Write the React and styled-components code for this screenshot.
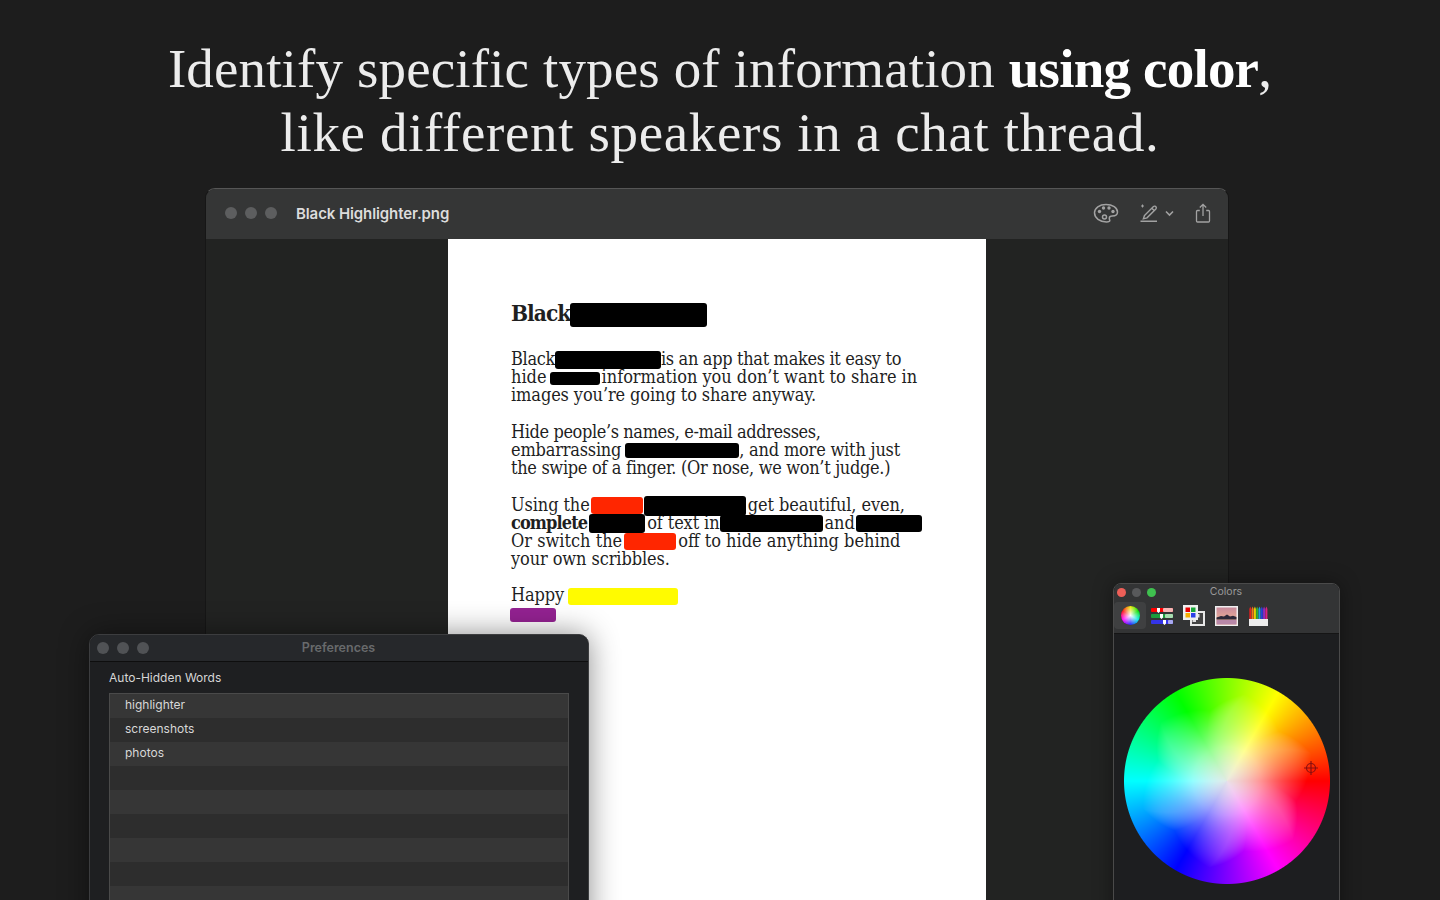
import React, { useEffect, useRef } from "react";
import styled, { createGlobalStyle } from "styled-components";

const Global = createGlobalStyle`
  html, body { margin: 0; padding: 0; background: #1d1d1d; }
  * { box-sizing: border-box; }
`;

const Page = styled.div`
  position: relative;
  width: 1440px;
  height: 900px;
  overflow: hidden;
  background: #1d1d1d;
  padding-top: 37px;
`;
const Headline = styled.h1`
  margin: 0;
  text-align: center;
  font-family: "Liberation Serif", serif;
  font-weight: 400;
  font-size: 55px;
  line-height: 64px;
  color: #ececec;
  strong { font-weight: 700; color: #fff; letter-spacing: -0.8px; }
`;
const HeadLine = styled.span`
  display: block;
  letter-spacing: ${p => p.$track}px;
`;
const MainWindow = styled.section`
  margin: 23px 0 0 205px;
  width: 1024px;
  height: 760px;
  background: #222322;
  border-radius: 10px 10px 0 0;
  border: 1px solid #161616;
  border-top-color: #565656;
  overflow: hidden;
`;
const TitleBar = styled.header`
  height: 50px;
  display: flex;
  align-items: center;
  padding: 0 17px 2px 19px;
  background: #353636;
`;
const Lights = styled.div`
  display: flex;
  gap: ${p => p.$gap}px;
`;
const Light = styled.span`
  display: block;
  width: ${p => p.$size}px;
  height: ${p => p.$size}px;
  border-radius: 50%;
  background: ${p => p.$color};
`;
const WindowTitle = styled.div`
  margin-left: 19px;
  font: 600 15px "Inter", "Liberation Sans", sans-serif;
  letter-spacing: -0.1px;
  color: #dcdcdc;
  flex: 1;
`;
const ToolIcons = styled.div`
  display: flex;
  align-items: center;
  color: #a2a2a2;
  svg { display: block; }
`;
const DocArea = styled.div`
  width: 538px;
  margin-left: 242px;
  height: 700px;
  background: #fff;
  padding: 59px 0 0 63px;
  font-family: "DejaVu Serif", serif;
  font-stretch: condensed;
  color: #1f1f1f;
`;
const DocTitle = styled.div`
  height: 30px;
  line-height: 30px;
  font-size: 22.5px;
  font-weight: 700;
  letter-spacing: -1px;
  margin-bottom: 22px;
  white-space: nowrap;
`;
const Para = styled.div`
  margin-bottom: 18.2px;
`;
const Line = styled.div`
  height: 18.2px;
  line-height: 18.2px;
  font-size: 18px;
  letter-spacing: ${p => p.$track ?? -0.1}px;
  white-space: nowrap;
  b { letter-spacing: -0.9px; }
`;
const Mark = styled.span`
  display: inline-block;
  width: ${p => p.$w}px;
  height: ${p => p.$h || 18}px;
  margin: -6px ${p => p.$r ?? 2}px -6px ${p => p.$l ?? 1}px;
  vertical-align: middle;
  background: ${p => p.$c || "#000"};
  border-radius: 3px;
  filter: url(#scribble) blur(0.4px);
`;
const FilterDefs = styled.svg`
  position: absolute;
  width: 0;
  height: 0;
`;
const Preferences = styled.section`
  position: absolute;
  left: 89px;
  top: 634px;
  width: 500px;
  height: 300px;
  background: #1e1f21;
  border-radius: 10px 10px 0 0;
  border: 1px solid #3c3d3f;
  box-shadow: 0 0 30px rgba(0,0,0,.45);
  font-family: "Inter", "Liberation Sans", sans-serif;
`;
const PrefBar = styled.header`
  height: 27px;
  display: flex;
  align-items: center;
  padding-left: 7px;
  background: #26282b;
  border-bottom: 1px solid #0e0e0e;
  border-radius: 9px 9px 0 0;
`;
const PrefTitle = styled.div`
  flex: 1;
  text-align: center;
  margin-left: -60px;
  margin-top: -2px;
  font-size: 12.5px;
  font-weight: 600;
  color: #686a6c;
`;
const PrefBody = styled.div`
  padding: 8px 19px 0 19px;
`;
const PrefLabel = styled.div`
  font-size: 12px;
  line-height: 16px;
  color: #d6d6d6;
  margin-bottom: 7px;
`;
const Table = styled.div`
  border: 1px solid #4a4a4a;
  border-bottom: 0;
`;
const Row = styled.div`
  height: 24px;
  line-height: 22px;
  padding-left: 15px;
  font-size: 12px;
  color: #d8d8d8;
  background: ${p => (p.$odd ? "#363636" : "#2d2d2d")};
`;
const ColorsPanel = styled.section`
  position: absolute;
  left: 1113px;
  top: 583px;
  width: 227px;
  height: 340px;
  background: #1d1e20;
  border-radius: 8px 8px 0 0;
  border: 1px solid #4a4a4a;
  box-shadow: 0 0 20px rgba(0,0,0,.4);
  font-family: "Inter", "Liberation Sans", sans-serif;
`;
const ColorsHead = styled.header`
  height: 50px;
  background: #333435;
  border-radius: 7px 7px 0 0;
  border-bottom: 1px solid #151515;
`;
const ColorsBar = styled.div`
  display: flex;
  align-items: center;
  height: 16px;
  padding-left: 3px;
`;
const ColorsTitle = styled.div`
  flex: 1;
  text-align: center;
  margin-left: -43px;
  margin-top: -2px;
  font-size: 10.5px;
  color: #9a9a9a;
`;
const PickerTabs = styled.div`
  display: flex;
  margin-top: 2px;
`;
const PickerTab = styled.div`
  width: 32px;
  height: 27px;
  display: flex;
  align-items: center;
  justify-content: center;
  border-radius: 4px;
  background: ${p => (p.$on ? "#3f4041" : "transparent")};
  svg { display: block; }
`;
const MiniWheel = styled.span`
  display: block;
  width: 19px;
  height: 19px;
  border-radius: 50%;
  background:
    radial-gradient(circle, #fff 0, rgba(255,255,255,0) 70%),
    conic-gradient(#e8e800, #00e000 60deg, #00e8e8 120deg, #2020ff 180deg, #ff00ff 240deg, #ff1010 300deg, #e8e800);
`;
const WheelWrap = styled.div`
  position: relative;
  margin: 44px 0 0 9.500px;
  width: 206px;
  height: 206px;
`;
const WheelCanvas = styled.canvas`
  display: block;
  width: 206px;
  height: 206px;
`;
const Crosshair = styled.svg`
  position: absolute;
  left: 179px;
  top: 82px;
`;

function ColorWheel() {
  const ref = useRef(null);
  useEffect(() => {
    const cv = ref.current;
    const ctx = cv.getContext("2d");
    const n = 206;
    const img = ctx.createImageData(n, n);
    const R = n / 2;
    const hsv = (h, s, v) => {
      const f = k => {
        const x = (k + h / 60) % 6;
        return v - v * s * Math.max(0, Math.min(x, 4 - x, 1));
      };
      return [f(5), f(3), f(1)];
    };
    const smooth = (a, b, x) => {
      const t = Math.max(0, Math.min(1, (x - a) / (b - a)));
      return t * t * (3 - 2 * t);
    };
    for (let y = 0; y < n; y++) {
      for (let x = 0; x < n; x++) {
        const dx = x + 0.5 - R, dy = R - y - 0.5;
        const r = Math.hypot(dx, dy) / R;
        const a = Math.max(0, Math.min(1, (1 - r) * R + 0.5));
        if (a === 0) continue;
        const th = ((Math.atan2(dy, dx) * 180) / Math.PI + 360) % 360;
        const edge = 90 + (1 - r) * 45;
        const t = (((th - edge) % 60) + 60) % 60 / 60;
        const wave = t < 0.7 ? t / 0.7 : (1 - t) / 0.3;
        const lim = 0.7 + 0.16 * wave * smooth(0.35, 0.75, r);
        const u = Math.min(1, r / lim);
        const s = 0.05 + 0.95 * Math.pow(u, 1.25);
        const c = hsv(th, Math.min(1, s), 1 - 0.08 * Math.max(0, 1 - r * 3));
        const i = (y * n + x) * 4;
        img.data[i] = c[0] * 255;
        img.data[i + 1] = c[1] * 255;
        img.data[i + 2] = c[2] * 255;
        img.data[i + 3] = a * 255;
      }
    }
    ctx.putImageData(img, 0, 0);
  }, []);
  return <WheelCanvas ref={ref} width={206} height={206} />;
}

const PaletteIcon = () => (
  <svg width="26" height="22" viewBox="0 0 26 22" fill="none" stroke="currentColor" strokeWidth="1.5">
    <path d="M13 2.5c6.5 0 11.5 3.3 11.5 7.6 0 3-2.6 4-5.2 4-1.8 0-3 .7-3 2.1 0 1.3.5 1.7.5 2.4 0 .9-1.3 1.4-3.3 1.4C6.800 19.900 1.500 16 1.500 10.800 1.500 5.900 6.500 2.500 13 2.500Z" />
    <circle cx="11.500" cy="15" r="2" />
    <circle cx="6.500" cy="9.500" r="1.700" fill="currentColor" stroke="none" />
    <circle cx="10.500" cy="6" r="1.700" fill="currentColor" stroke="none" />
    <circle cx="16" cy="6" r="1.700" fill="currentColor" stroke="none" />
    <circle cx="20" cy="9.500" r="1.700" fill="currentColor" stroke="none" />
  </svg>
);
const PenIcon = () => (
  <svg width="20" height="20" viewBox="0 0 20 20" fill="none" stroke="currentColor" strokeWidth="1.400" style={{ marginLeft: 20 }}>
    <path d="M5.500 12.500 14.500 3.500c.8-.8 2-.3 2.400.2.500.6.700 1.500 0 2.200L8 14.800l-3.600 1Z" />
    <path d="M12.800 5.200l2.400 2.400" />
    <path d="M1.500 18.300h16.500" />
    <path d="M3.500 1.500v3M2 3h3" strokeWidth="1" />
  </svg>
);
const ChevronIcon = () => (
  <svg width="9" height="7" viewBox="0 0 9 7" fill="none" stroke="currentColor" strokeWidth="1.600" style={{ marginLeft: 6 }}>
    <path d="M1 1.500 4.500 5 8 1.500" />
  </svg>
);
const ShareIcon = () => (
  <svg width="16" height="21" viewBox="0 0 16 21" fill="none" stroke="currentColor" strokeWidth="1.300" style={{ marginLeft: 21 }}>
    <path d="M4.800 7.500H2.500a1 1 0 0 0-1 1V18a1 1 0 0 0 1 1h11a1 1 0 0 0 1-1V8.500a1 1 0 0 0-1-1h-2.300" />
    <path d="M8 13V1.500M4.800 4.500 8 1.300l3.200 3.200" />
  </svg>
);
const SlidersIcon = () => (
  <svg width="24" height="19" viewBox="0 0 24 19">
    <rect x="1" y="2" width="22" height="4" rx="1" fill="#f00" />
    <rect x="13" y="2" width="10" height="4" rx="1" fill="#f5b5b5" />
    <rect x="1" y="8" width="22" height="4" rx="1" fill="#1c9c3c" />
    <rect x="15" y="8" width="8" height="4" rx="1" fill="#a8dcb0" />
    <rect x="1" y="14" width="22" height="4" rx="1" fill="#3434e8" />
    <rect x="18" y="14" width="5" height="4" rx="1" fill="#a8a8f0" />
    <path d="M7 2h3v3.500L8.500 7 7 5.500ZM10 8h3v3.500L11.500 13 10 11.500ZM13 14h3v3.500L14.500 19 13 17.500Z" fill="#fff" />
  </svg>
);
const SwatchIcon = () => (
  <svg width="22" height="21" viewBox="0 0 22 21">
    <rect x="7" y="6" width="15" height="15" fill="#e8e8e8" />
    <rect x="9" y="8" width="11" height="11" fill="#444" />
    <rect x="13" y="9" width="3.500" height="3.500" fill="#ddd" />
    <rect x="9.500" y="13.500" width="3.500" height="3.500" fill="#ddd" />
    <rect x="0" y="0" width="15" height="15" fill="#f0f0f0" />
    <rect x="2.500" y="2.500" width="4.500" height="4.500" fill="#e80000" />
    <rect x="8" y="2.500" width="4.500" height="4.500" fill="#18a838" />
    <rect x="2.500" y="8" width="4.500" height="4.500" fill="#f8b000" />
    <rect x="8" y="8" width="4.500" height="4.500" fill="#2c40e8" />
  </svg>
);
const ImageIcon = () => (
  <svg width="23" height="20" viewBox="0 0 23 20">
    <defs>
      <linearGradient id="sky" x1="0" y1="0" x2="0" y2="1">
        <stop offset="0" stopColor="#c88a9c" />
        <stop offset="1" stopColor="#f4b890" />
      </linearGradient>
    </defs>
    <rect width="23" height="20" fill="#efefef" />
    <rect x="1.500" y="1.500" width="20" height="17" fill="url(#sky)" />
    <path d="M1.500 11.500 6 10l3 .5 3-2 3 2 3-.8 3.500 1.300v2.500h-20Z" fill="#2c2838" />
    <rect x="1.500" y="14" width="20" height="4.500" fill="#b888a8" />
  </svg>
);
const PencilsIcon = () => {
  const cols = ["#e02020", "#f07818", "#e8d000", "#30b030", "#20a0e0", "#2840d8", "#9028c0", "#e02080"];
  return (
    <svg width="19" height="20" viewBox="0 0 19 20">
      {cols.map((c, i) => (
        <g key={c}>
          <rect x={i * 2.3 + 0.3} y="3" width="2" height="10" fill={c} />
          <path d={`M${i * 2.3 + 0.3} 3l1-2.500 1 2.500Z`} fill={c} />
        </g>
      ))}
      <rect y="13" width="19" height="7" fill="#ececec" />
    </svg>
  );
};

const TrafficDim = ["#5d5e5f", "#5d5e5f", "#5d5e5f"];
const PrefDim = ["#505255", "#505255", "#505255"];
const words = ["highlighter", "screenshots", "photos", "", "", "", "", "", ""];

export default function App() {
  return (
    <Page>
      <Global />
      <FilterDefs aria-hidden="true">
        <filter id="scribble" x="-5%" y="-15%" width="110%" height="130%">
          <feTurbulence type="fractalNoise" baseFrequency="0.05 0.6" numOctaves="2" seed="3" />
          <feDisplacementMap in="SourceGraphic" scale="1.4" />
        </filter>
      </FilterDefs>
      <Headline>
        <HeadLine $track={0.14}>Identify specific types of information <strong>using color</strong>,</HeadLine>
        <HeadLine $track={0.64}>like different speakers in a chat thread.</HeadLine>
      </Headline>
      <MainWindow>
        <TitleBar>
          <Lights $gap={8}>
            {TrafficDim.map((c, i) => <Light key={i} $size={12} $color={c} />)}
          </Lights>
          <WindowTitle>Black Highlighter.png</WindowTitle>
          <ToolIcons>
            <PaletteIcon />
            <PenIcon />
            <ChevronIcon />
            <ShareIcon />
          </ToolIcons>
        </TitleBar>
        <DocArea>
          <DocTitle>Black<Mark $w={137} $h={24} $l={0} /></DocTitle>
          <Para>
            <Line $track={-0.33}>Black<Mark $w={106} $l={0} $r={0} />is an app that makes it easy to</Line>
            <Line $track={-0.02}>hide <Mark $w={50} $h={13} $l={-2} />information you don’t want to share in</Line>
            <Line>images you’re going to share anyway.</Line>
          </Para>
          <Para>
            <Line $track={-0.39}>Hide people’s names, e-mail addresses,</Line>
            <Line $track={-0.2}>embarrassing <Mark $w={114} $h={15} $l={-1} $r={0} />, and more with just</Line>
            <Line $track={-0.32}>the swipe of a finger. (Or nose, we won’t judge.)</Line>
          </Para>
          <Para>
            <Line>Using the <Mark $w={52} $h={17} $c="#ff2600" $l={-4} $r={1} /><Mark $w={102} $h={20} $l={0} />get beautiful, even,</Line>
            <Line><b>complete</b><Mark $w={56} $h={19} $l={2} />of text in<Mark $w={103} $h={17} $l={0} />and<Mark $w={66} $h={17} $l={1} /></Line>
            <Line $track={0}>Or switch the <Mark $w={52} $h={17} $c="#ff2600" $l={-3} />off to hide anything behind</Line>
            <Line>your own scribbles.</Line>
          </Para>
          <Para>
            <Line>Happy <Mark $w={110} $h={17} $c="#fffb00" $l={-1} /></Line>
            <Line><Mark $w={46} $h={14} $c="#942192" $l={-1} /></Line>
          </Para>
        </DocArea>
      </MainWindow>

      <Preferences>
        <PrefBar>
          <Lights $gap={8}>
            {PrefDim.map((c, i) => <Light key={i} $size={12} $color={c} />)}
          </Lights>
          <PrefTitle>Preferences</PrefTitle>
        </PrefBar>
        <PrefBody>
          <PrefLabel>Auto-Hidden Words</PrefLabel>
          <Table>
            {words.map((w, i) => <Row key={i} $odd={i % 2 === 0}>{w}</Row>)}
          </Table>
        </PrefBody>
      </Preferences>

      <ColorsPanel>
        <ColorsHead>
          <ColorsBar>
            <Lights $gap={6}>
              <Light $size={9} $color="#ed5f58" />
              <Light $size={9} $color="#58595b" />
              <Light $size={9} $color="#3fc04f" />
            </Lights>
            <ColorsTitle>Colors</ColorsTitle>
          </ColorsBar>
          <PickerTabs>
            <PickerTab $on><MiniWheel /></PickerTab>
            <PickerTab><SlidersIcon /></PickerTab>
            <PickerTab><SwatchIcon /></PickerTab>
            <PickerTab><ImageIcon /></PickerTab>
            <PickerTab><PencilsIcon /></PickerTab>
          </PickerTabs>
        </ColorsHead>
        <WheelWrap>
          <ColorWheel />
          <Crosshair width="16" height="16" viewBox="0 0 16 16" fill="none" stroke="#8a1010" strokeWidth="1.200">
            <circle cx="8" cy="8" r="4.500" />
            <path d="M8 1v14M1 8h14" />
          </Crosshair>
        </WheelWrap>
      </ColorsPanel>
    </Page>
  );
}
